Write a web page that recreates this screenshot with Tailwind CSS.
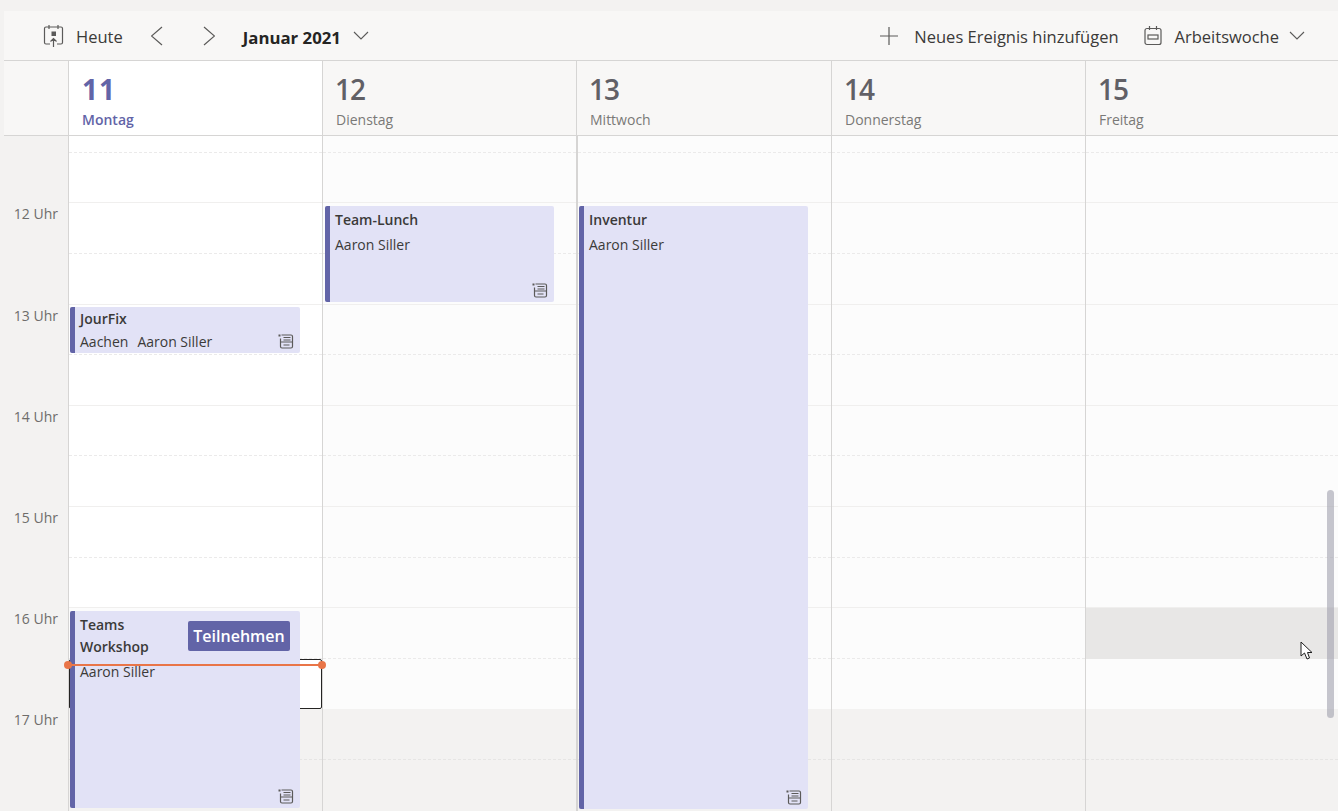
<!DOCTYPE html>
<html lang="de">
<head>
  <meta charset="UTF-8">
  <title>Kalender</title>
  <script src="https://cdn.jsdelivr.net/npm/@tailwindcss/browser@4"></script>
</head>
<body class="h-[811px] overflow-hidden bg-[#f3f2f1] pt-[11px] pl-[4px] font-['Open_Sans','Noto_Sans',sans-serif] text-[#252423]">
  <!-- toolbar -->
  <div class="flex h-[50px] items-center justify-between border-b border-[#d6d5d4] bg-[#f8f7f6] text-[#3b3a39]">
    <div class="flex items-center">
      <svg class="ml-[39px] h-[24px] w-[22px]" viewBox="0 0 22 24" fill="none" stroke="#5b5a59" stroke-width="1.2"><path d="M6 3H3Q1.500 3 1.500 4.500V18.500Q1.500 20 3 20H7M14 20H18Q19.500 20 19.500 18.500V4.500Q19.500 3 18 3H15M6 1V5M15 1V5M6 3H15M10.500 23V14.500M7.500 17.500L10.500 14.500L13.500 17.500"/><rect x="8.500" y="7.500" width="4.500" height="4.500" fill="#5b5a59" stroke="none"/></svg>
      <span class="ml-[11px] mt-[4px] text-[16.500px]">Heute</span>
      <svg class="ml-[28px] mt-[1px] h-[20px] w-[12px]" viewBox="0 0 12 20" fill="none" stroke="#5b5a59" stroke-width="1.200"><path d="M11 1L0.500 10L11 19"/></svg>
      <svg class="ml-[40px] mt-[1px] h-[20px] w-[12px]" viewBox="0 0 12 20" fill="none" stroke="#5b5a59" stroke-width="1.200"><path d="M1 1L11.500 10L1 19"/></svg>
      <span class="ml-[28px] mt-[4px] text-[16.800px] font-bold text-[#252423]">Januar 2021</span>
      <svg class="ml-[12px] h-[9px] w-[16px]" viewBox="0 0 16 9" fill="none" stroke="#5b5a59" stroke-width="1.100"><path d="M1 1L8 8L15 1"/></svg>
    </div>
    <div class="flex items-center">
      <svg class="h-[18px] w-[18px]" viewBox="0 0 18 18" fill="none" stroke="#5b5a59" stroke-width="1.200"><path d="M9 0V18M0 9H18"/></svg>
      <span class="ml-[16px] mt-[4px] text-[16.500px]">Neues Ereignis hinzufügen</span>
      <svg class="ml-[25px] h-[20px] w-[18px]" viewBox="0 0 18 20" fill="none" stroke="#5b5a59" stroke-width="1.200"><rect x="1" y="2.500" width="16" height="16" rx="2"/><path d="M5.500 0V4M12.500 0V4"/><rect x="4" y="9" width="10" height="4"/></svg>
      <span class="ml-[13px] mt-[4px] text-[16.500px]">Arbeitswoche</span>
      <svg class="ml-[10px] mr-[33px] h-[9px] w-[16px]" viewBox="0 0 16 9" fill="none" stroke="#5b5a59" stroke-width="1.100"><path d="M1 1L8 8L15 1"/></svg>
    </div>
  </div>

  <!-- day header -->
  <div class="grid h-[75px] grid-cols-[64px_254px_254px_255px_254px_253px] border-b border-[#d6d5d4] bg-[#f8f7f6]">
    <div></div>
    <div class="border-l border-[#d6d5d4] bg-white pl-[13px] text-[#6264a7]">
      <div class="mt-[8px] text-[28px] leading-[40px] font-bold tracking-[1px]">11</div>
      <div class="mt-[2px] text-[14px] leading-[18px] font-semibold">Montag</div>
    </div>
    <div class="border-l border-[#d6d5d4] pl-[13px] text-[#616066]">
      <div class="ml-[-1px] mt-[8px] text-[28px] leading-[40px] font-semibold tracking-[-1px]">12</div>
      <div class="mt-[2px] text-[14px] leading-[18px] text-[#7a7977]">Dienstag</div>
    </div>
    <div class="border-l border-[#d6d5d4] pl-[13px] text-[#616066]">
      <div class="ml-[-1px] mt-[8px] text-[28px] leading-[40px] font-semibold tracking-[-1px]">13</div>
      <div class="mt-[2px] text-[14px] leading-[18px] text-[#7a7977]">Mittwoch</div>
    </div>
    <div class="border-l border-[#d6d5d4] pl-[13px] text-[#616066]">
      <div class="ml-[-1px] mt-[8px] text-[28px] leading-[40px] font-semibold tracking-[-1px]">14</div>
      <div class="mt-[2px] text-[14px] leading-[18px] text-[#7a7977]">Donnerstag</div>
    </div>
    <div class="border-l border-[#d6d5d4] pl-[13px] text-[#616066]">
      <div class="ml-[-1px] mt-[8px] text-[28px] leading-[40px] font-semibold tracking-[-1px]">15</div>
      <div class="mt-[2px] text-[14px] leading-[18px] text-[#7a7977]">Freitag</div>
    </div>
  </div>

  <!-- week body -->
  <div class="relative grid h-[675px] grid-cols-[64px_254px_254px_255px_254px_253px] overflow-hidden">
    <!-- hours rail -->
    <div class="pr-[10px] text-right text-[14px] leading-[20px] text-[#6e6d6b]">
      <div class="h-[68.400px]"></div>
      <div class="h-[101.200px]">12 Uhr</div>
      <div class="h-[101.200px]">13 Uhr</div>
      <div class="h-[101.200px]">14 Uhr</div>
      <div class="h-[101.200px]">15 Uhr</div>
      <div class="h-[101.200px]">16 Uhr</div>
      <div class="h-[101.200px]">17 Uhr</div>
    </div>

    <!-- Montag -->
    <div class="relative z-10 border-l border-[#d6d5d4] bg-white">
      <div class="h-[16.800px] border-b border-dashed border-[#ebeaea]"></div>
      <div class="h-[50.600px] border-b border-[#f0efee]"></div>
      <div class="h-[50.600px] border-b border-dashed border-[#ebeaea]"></div>
      <div class="h-[50.600px] border-b border-[#f0efee]"></div>
      <div class="h-[50.600px] border-b border-dashed border-[#ebeaea]"></div>
      <div class="h-[50.600px] border-b border-[#f0efee]"></div>
      <div class="h-[50.600px] border-b border-dashed border-[#ebeaea]"></div>
      <div class="h-[50.600px] border-b border-[#f0efee]"></div>
      <div class="h-[50.600px] border-b border-dashed border-[#ebeaea]"></div>
      <div class="h-[50.600px] border-b border-[#f0efee]"></div>
      <div class="h-[50.600px] border-b border-dashed border-[#ebeaea] bg-[#fcfcfc]"></div>
      <div class="h-[50.600px] rounded-[2px] border border-[#252423] bg-white"></div>
      <div class="h-[50.600px] border-b border-dashed border-[#e6e5e4] bg-[#f3f2f1]"></div>
      <div class="h-[60px] bg-[#f3f2f1]"></div>

      <div class="absolute left-[1px] top-[171px] flex h-[46px] w-[230px] overflow-hidden rounded-[2px] bg-[#e2e2f6]">
        <div class="w-[5px] shrink-0 bg-[#6264a7]"></div>
        <div class="relative flex-1 pl-[5px] pt-[2px] text-[14px] leading-[20px] text-[#3b3a39]">
          <div class="font-semibold">JourFix</div>
          <div class="mt-[3px] flex gap-[9px]"><span>Aachen</span><span>Aaron Siller</span></div>
          <svg class="absolute right-[6px] bottom-[4px] h-[15px] w-[16px]" viewBox="0 0 16 15" fill="none" stroke="#5b5a59" stroke-width="1.200"><path d="M3.500 1H13Q14.500 1 14.500 2.500V12.500Q14.500 14 13 14H4Q2.500 14 2.500 12.500V4.500M2.500 8H14.500M5.500 3.500H12.500M5.500 6H12.500M5.500 11H11.500"/><rect x="0.500" y="0.500" width="2" height="2" fill="#5b5a59" stroke="none"/></svg>
        </div>
      </div>

      <div class="absolute left-[1px] top-[475px] flex h-[197px] w-[230px] overflow-hidden rounded-[2px] bg-[#e2e2f6]">
        <div class="w-[5px] shrink-0 bg-[#6264a7]"></div>
        <div class="relative flex-1 pl-[5px] pt-[3px] text-[14px] leading-[22px] text-[#3b3a39]">
          <div class="font-semibold">Teams<br>Workshop</div>
          <div class="mt-[3px]">Aaron Siller</div>
          <div class="absolute left-[113px] top-[10px] flex h-[30px] w-[102px] items-center justify-center rounded-[2px] bg-[#6264a7] text-[16px] font-semibold text-white">Teilnehmen</div>
          <svg class="absolute right-[6px] bottom-[4px] h-[15px] w-[16px]" viewBox="0 0 16 15" fill="none" stroke="#5b5a59" stroke-width="1.200"><path d="M3.500 1H13Q14.500 1 14.500 2.500V12.500Q14.500 14 13 14H4Q2.500 14 2.500 12.500V4.500M2.500 8H14.500M5.500 3.500H12.500M5.500 6H12.500M5.500 11H11.500"/><rect x="0.500" y="0.500" width="2" height="2" fill="#5b5a59" stroke="none"/></svg>
        </div>
      </div>

      <!-- current time -->
      <div class="absolute left-[-1px] top-[528px] h-[2px] w-[254px] bg-[#e97548]"></div>
      <div class="absolute left-[-5px] top-[525px] h-[8px] w-[8px] rounded-full bg-[#e97548]"></div>
      <div class="absolute left-[249px] top-[525px] h-[8px] w-[8px] rounded-full bg-[#e97548]"></div>
    </div>

    <!-- Dienstag -->
    <div class="relative border-l border-[#d6d5d4] bg-[#fcfcfc]">
      <div class="h-[16.800px] border-b border-dashed border-[#ebeaea]"></div>
      <div class="h-[50.600px] border-b border-[#f0efee]"></div>
      <div class="h-[50.600px] border-b border-dashed border-[#ebeaea]"></div>
      <div class="h-[50.600px] border-b border-[#f0efee]"></div>
      <div class="h-[50.600px] border-b border-dashed border-[#ebeaea]"></div>
      <div class="h-[50.600px] border-b border-[#f0efee]"></div>
      <div class="h-[50.600px] border-b border-dashed border-[#ebeaea]"></div>
      <div class="h-[50.600px] border-b border-[#f0efee]"></div>
      <div class="h-[50.600px] border-b border-dashed border-[#ebeaea]"></div>
      <div class="h-[50.600px] border-b border-[#f0efee]"></div>
      <div class="h-[50.600px] border-b border-dashed border-[#ebeaea]"></div>
      <div class="h-[50.600px]"></div>
      <div class="h-[50.600px] border-b border-dashed border-[#e6e5e4] bg-[#f3f2f1]"></div>
      <div class="h-[60px] bg-[#f3f2f1]"></div>

      <div class="absolute left-[2px] top-[70px] flex h-[96px] w-[229px] overflow-hidden rounded-[2px] bg-[#e2e2f6]">
        <div class="w-[5px] shrink-0 bg-[#6264a7]"></div>
        <div class="relative flex-1 pl-[5px] pt-[4px] text-[14px] leading-[20px] text-[#3b3a39]">
          <div class="font-semibold">Team-Lunch</div>
          <div class="mt-[5px]">Aaron Siller</div>
          <svg class="absolute right-[6px] bottom-[4px] h-[15px] w-[16px]" viewBox="0 0 16 15" fill="none" stroke="#5b5a59" stroke-width="1.200"><path d="M3.500 1H13Q14.500 1 14.500 2.500V12.500Q14.500 14 13 14H4Q2.500 14 2.500 12.500V4.500M2.500 8H14.500M5.500 3.500H12.500M5.500 6H12.500M5.500 11H11.500"/><rect x="0.500" y="0.500" width="2" height="2" fill="#5b5a59" stroke="none"/></svg>
        </div>
      </div>
    </div>

    <!-- Mittwoch -->
    <div class="relative border-l-2 border-[#d6d5d4] bg-[#fcfcfc]">
      <div class="h-[16.800px] border-b border-dashed border-[#ebeaea]"></div>
      <div class="h-[50.600px] border-b border-[#f0efee]"></div>
      <div class="h-[50.600px] border-b border-dashed border-[#ebeaea]"></div>
      <div class="h-[50.600px] border-b border-[#f0efee]"></div>
      <div class="h-[50.600px] border-b border-dashed border-[#ebeaea]"></div>
      <div class="h-[50.600px] border-b border-[#f0efee]"></div>
      <div class="h-[50.600px] border-b border-dashed border-[#ebeaea]"></div>
      <div class="h-[50.600px] border-b border-[#f0efee]"></div>
      <div class="h-[50.600px] border-b border-dashed border-[#ebeaea]"></div>
      <div class="h-[50.600px] border-b border-[#f0efee]"></div>
      <div class="h-[50.600px] border-b border-dashed border-[#ebeaea]"></div>
      <div class="h-[50.600px]"></div>
      <div class="h-[50.600px] border-b border-dashed border-[#e6e5e4] bg-[#f3f2f1]"></div>
      <div class="h-[60px] bg-[#f3f2f1]"></div>

      <div class="absolute left-[1px] top-[70px] flex h-[603px] w-[229px] overflow-hidden rounded-[2px] bg-[#e2e2f6]">
        <div class="w-[5px] shrink-0 bg-[#6264a7]"></div>
        <div class="relative flex-1 pl-[5px] pt-[4px] text-[14px] leading-[20px] text-[#3b3a39]">
          <div class="font-semibold">Inventur</div>
          <div class="mt-[5px]">Aaron Siller</div>
          <svg class="absolute right-[6px] bottom-[4px] h-[15px] w-[16px]" viewBox="0 0 16 15" fill="none" stroke="#5b5a59" stroke-width="1.200"><path d="M3.500 1H13Q14.500 1 14.500 2.500V12.500Q14.500 14 13 14H4Q2.500 14 2.500 12.500V4.500M2.500 8H14.500M5.500 3.500H12.500M5.500 6H12.500M5.500 11H11.500"/><rect x="0.500" y="0.500" width="2" height="2" fill="#5b5a59" stroke="none"/></svg>
        </div>
      </div>
    </div>

    <!-- Donnerstag -->
    <div class="border-l border-[#d6d5d4] bg-[#fcfcfc]">
      <div class="h-[16.800px] border-b border-dashed border-[#ebeaea]"></div>
      <div class="h-[50.600px] border-b border-[#f0efee]"></div>
      <div class="h-[50.600px] border-b border-dashed border-[#ebeaea]"></div>
      <div class="h-[50.600px] border-b border-[#f0efee]"></div>
      <div class="h-[50.600px] border-b border-dashed border-[#ebeaea]"></div>
      <div class="h-[50.600px] border-b border-[#f0efee]"></div>
      <div class="h-[50.600px] border-b border-dashed border-[#ebeaea]"></div>
      <div class="h-[50.600px] border-b border-[#f0efee]"></div>
      <div class="h-[50.600px] border-b border-dashed border-[#ebeaea]"></div>
      <div class="h-[50.600px] border-b border-[#f0efee]"></div>
      <div class="h-[50.600px] border-b border-dashed border-[#ebeaea]"></div>
      <div class="h-[50.600px]"></div>
      <div class="h-[50.600px] border-b border-dashed border-[#e6e5e4] bg-[#f3f2f1]"></div>
      <div class="h-[60px] bg-[#f3f2f1]"></div>
    </div>

    <!-- Freitag -->
    <div class="border-l border-[#d6d5d4] bg-[#fcfcfc]">
      <div class="h-[16.800px] border-b border-dashed border-[#ebeaea]"></div>
      <div class="h-[50.600px] border-b border-[#f0efee]"></div>
      <div class="h-[50.600px] border-b border-dashed border-[#ebeaea]"></div>
      <div class="h-[50.600px] border-b border-[#f0efee]"></div>
      <div class="h-[50.600px] border-b border-dashed border-[#ebeaea]"></div>
      <div class="h-[50.600px] border-b border-[#f0efee]"></div>
      <div class="h-[50.600px] border-b border-dashed border-[#ebeaea]"></div>
      <div class="h-[50.600px] border-b border-[#f0efee]"></div>
      <div class="h-[50.600px] border-b border-dashed border-[#ebeaea]"></div>
      <div class="h-[50.600px] border-b border-[#f0efee]"></div>
      <div class="h-[50.600px] bg-[#e8e7e6]"></div>
      <div class="h-[50.600px]"></div>
      <div class="h-[50.600px] border-b border-dashed border-[#e6e5e4] bg-[#f3f2f1]"></div>
      <div class="h-[60px] bg-[#f3f2f1]"></div>
    </div>

    <!-- scrollbar and pointer -->
    <div class="absolute left-[1323px] top-[354px] z-20 h-[228px] w-[7px] rounded-full bg-[#a0a0ae]/60"></div>
    <svg class="absolute left-[1296px] top-[505px] z-20 h-[20px] w-[14px]" viewBox="0 0 14 20" fill="#ffffff" stroke="#1f1f1f" stroke-width="1"><path d="M1 1V15L4.500 12L7 18L9.500 17L7.500 11.500H12Z"/></svg>
  </div>
</body>
</html>
